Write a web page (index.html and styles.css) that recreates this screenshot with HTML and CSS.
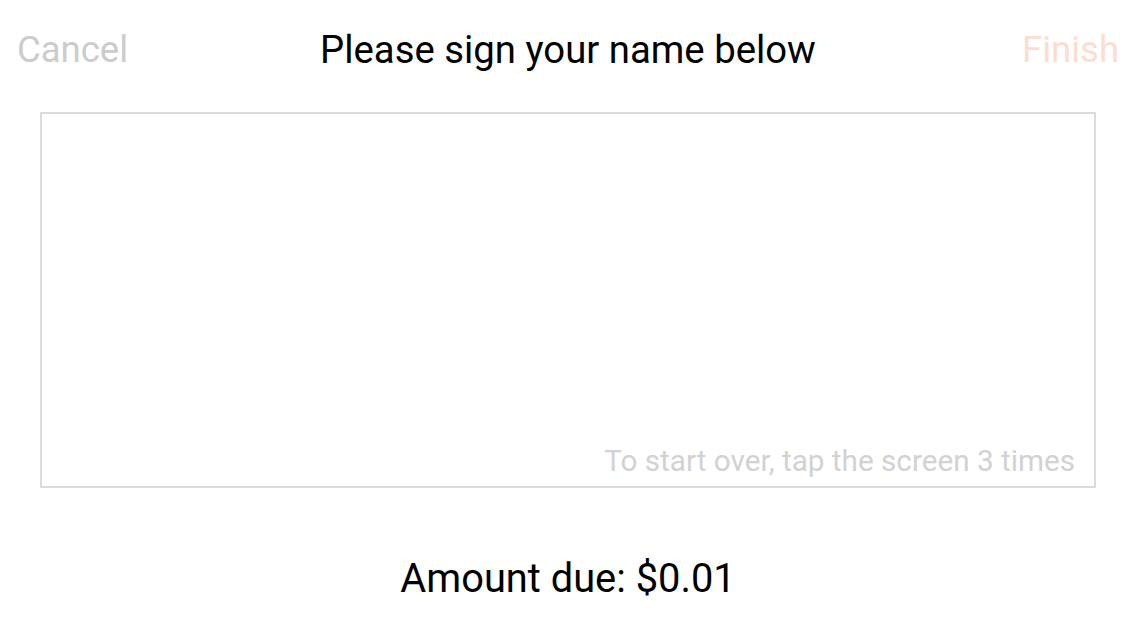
FILE: index.html
```html
<!DOCTYPE html>
<html>
<head>
<meta charset="utf-8">
<link rel="stylesheet" href="styles.css">
</head>
<body>
<div class="screen">
  <header class="topbar">
    <span class="btn cancel">Cancel</span>
    <h1 class="title">Please sign your name below</h1>
    <span class="btn finish">Finish</span>
  </header>
  <div class="pad">
    <span class="hint">To start over, tap the screen 3 times</span>
  </div>
  <div class="amount">Amount due: $0.01</div>
</div>
</body>
</html>
```
FILE: styles.css
```css
html, body {
  margin: 0;
  padding: 0;
  background: #ffffff;
}
body {
  font-family: Roboto, "Noto Sans", "Liberation Sans", sans-serif;
  width: 1136px;
  height: 640px;
  overflow: hidden;
}
.screen {
  display: flex;
  flex-direction: column;
  height: 640px;
}
.topbar {
  display: grid;
  grid-template-columns: 1fr auto 1fr;
  align-items: center;
  height: 98px;
  padding: 0 17px 0 17px;
  box-sizing: border-box;
}
.title {
  margin: 0;
  font-weight: 400;
  font-size: 38.3px;
  color: #000;
}
.btn {
  font-size: 36.5px;
}
.cancel { color: #cccccc; justify-self: start; }
.finish { color: #fddcd1; justify-self: end; }
.pad {
  margin: 14px 40px 0 40px;
  height: 376px;
  border: 2px solid #dcdcdc;
  box-sizing: border-box;
  display: flex;
  align-items: flex-end;
  justify-content: flex-end;
  padding: 0 19px 8px 0;
}
.hint {
  font-size: 29.7px;
  color: #d2d2d2;
}
.amount {
  margin-top: 67px;
  text-align: center;
  font-size: 39.8px;
  color: #000;
}
```
